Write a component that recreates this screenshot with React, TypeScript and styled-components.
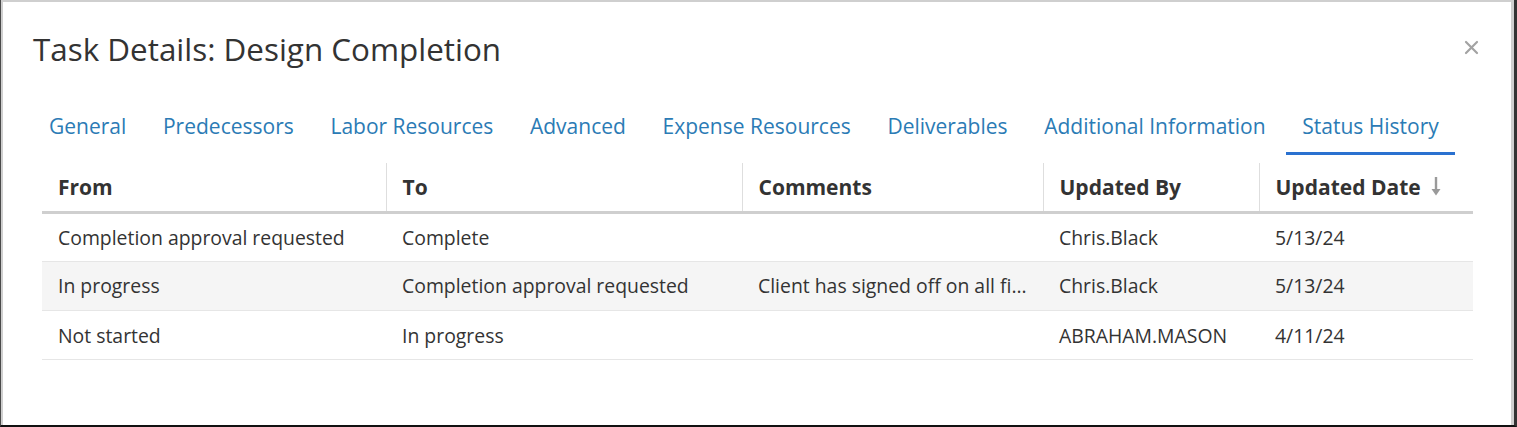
import React from "react";
import styled, { createGlobalStyle } from "styled-components";

const GlobalStyle = createGlobalStyle`
  html, body { margin: 0; padding: 0; background: #ffffff; }
  body { font-family: "Open Sans", "Noto Sans", sans-serif; color: #333; }
  * { box-sizing: border-box; }
`;

const Frame = styled.div`
  width: 1517px;
  height: 427px;
  border-left: 1px solid #4a4a4a;
  border-right: 3px solid #333;
  border-bottom: 2px solid #111;
  display: flex;
`;

const Modal = styled.div`
  flex: 1;
  background: #fff;
  border-top: 2px solid #cfcfcf;
  border-left: 2px solid #cfcfcf;
  border-right: 3px solid #cfcfcf;
  padding: 27px 30px 0 30px;
  display: flex;
  flex-direction: column;
`;

const Header = styled.div`
  display: flex;
  justify-content: space-between;
  align-items: center;
`;

const Title = styled.h1`
  margin: 0;
  font-size: 31.4px;
  line-height: 40px;
  font-weight: 400;
  color: #333;
`;

const CloseButton = styled.button`
  border: none;
  background: none;
  padding: 0;
  width: 18px;
  height: 18px;
  margin-right: 1px;
  margin-top: -4px;
  display: flex;
  align-items: center;
  justify-content: center;
  cursor: pointer;
`;

const Tabs = styled.nav`
  display: flex;
  gap: 4.7px;
  margin-top: 35px;
  margin-left: 0;
`;

const Tab = styled.div<{ $active?: boolean }>`
  padding: 8px 16px 12px;
  font-size: 21px;
  line-height: 28px;
  color: #2b7bb5;
  border-bottom: 3px solid ${(p) => (p.$active ? "#2a71d0" : "transparent")};
  white-space: nowrap;
  cursor: pointer;
`;

const Table = styled.table`
  margin: 8px 8px 0 9px;
  border-collapse: collapse;
  table-layout: fixed;
  width: calc(100% - 17px);
  font-size: 19.4px;
`;

const Th = styled.th<{ $last?: boolean }>`
  text-align: left;
  font-weight: 700;
  font-size: 21px;
  height: 49px;
  padding: 0 16px;
  color: #333;
  border-bottom: 3px solid #cfcfcf;
  border-right: ${(p) => (p.$last ? "none" : "1px solid #dedede")};
  white-space: nowrap;
`;

const HeadInner = styled.span`
  display: inline-flex;
  align-items: center;
  gap: 10px;
`;

const Tr = styled.tr<{ $striped?: boolean }>`
  background: ${(p) => (p.$striped ? "#f5f5f5" : "#fff")};
`;

const Td = styled.td`
  height: 49.3px;
  padding: 0 16px;
  border-bottom: 1px solid #e6e6e6;
  color: #333;
  white-space: nowrap;
  overflow: hidden;
  text-overflow: ellipsis;
`;

const columns = [
  { label: "From", width: 344 },
  { label: "To", width: 356 },
  { label: "Comments", width: 301 },
  { label: "Updated By", width: 216 },
  { label: "Updated Date", width: 214, sort: true },
];

const rows = [
  ["Completion approval requested", "Complete", "", "Chris.Black", "5/13/24"],
  [
    "In progress",
    "Completion approval requested",
    "Client has signed off on all final design deliverables",
    "Chris.Black",
    "5/13/24",
  ],
  ["Not started", "In progress", "", "ABRAHAM.MASON", "4/11/24"],
];

const tabs = [
  "General",
  "Predecessors",
  "Labor Resources",
  "Advanced",
  "Expense Resources",
  "Deliverables",
  "Additional Information",
  "Status History",
];

const SortArrow = () => (
  <svg width="10" height="19" viewBox="0 0 10 19">
    <path d="M5 0 V15" stroke="#9a9a9a" strokeWidth="2.4" />
    <path d="M0.5 12 L5 18.5 L9.5 12 Z" fill="#9a9a9a" />
  </svg>
);

export default function App() {
  return (
    <>
      <GlobalStyle />
      <Frame>
        <Modal>
          <Header>
            <Title>Task Details: Design Completion</Title>
            <CloseButton aria-label="Close">
              <svg width="15" height="15" viewBox="0 0 15 15">
                <path
                  d="M2 2 L13 13 M13 2 L2 13"
                  stroke="#a3a3a3"
                  strokeWidth="2.2"
                  strokeLinecap="round"
                />
              </svg>
            </CloseButton>
          </Header>
          <Tabs>
            {tabs.map((t) => (
              <Tab key={t} $active={t === "Status History"}>
                {t}
              </Tab>
            ))}
          </Tabs>
          <Table>
            <colgroup>
              {columns.map((c) => (
                <col key={c.label} style={{ width: c.width }} />
              ))}
            </colgroup>
            <thead>
              <tr>
                {columns.map((c, i) => (
                  <Th key={c.label} $last={i === columns.length - 1}>
                    <HeadInner>
                      {c.label}
                      {c.sort && <SortArrow />}
                    </HeadInner>
                  </Th>
                ))}
              </tr>
            </thead>
            <tbody>
              {rows.map((r, i) => (
                <Tr key={i} $striped={i === 1}>
                  {r.map((cell, j) => (
                    <Td key={j}>{cell}</Td>
                  ))}
                </Tr>
              ))}
            </tbody>
          </Table>
        </Modal>
      </Frame>
    </>
  );
}
